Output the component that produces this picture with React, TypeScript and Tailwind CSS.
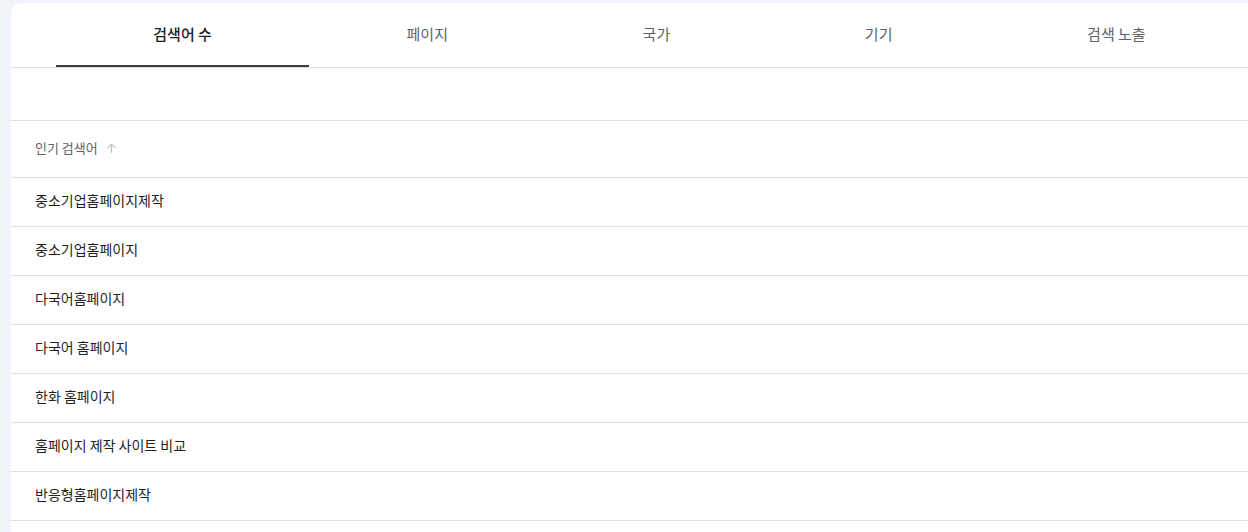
import React, { useState } from 'react';

const tabs = ['검색어 수', '페이지', '국가', '기기', '검색 노출'];

const queries = [
  '중소기업홈페이지제작',
  '중소기업홈페이지',
  '다국어홈페이지',
  '다국어 홈페이지',
  '한화 홈페이지',
  '홈페이지 제작 사이트 비교',
  '반응형홈페이지제작',
];

const font = { fontFamily: '"Noto Sans CJK KR", "Noto Sans", sans-serif' };

export default function App() {
  const [active, setActive] = useState(0);

  return (
    <div className="min-h-screen bg-[#f0f4f9] pt-[3px] pl-[11px]" style={font}>
      <div className="bg-white rounded-tl-[10px] min-h-[529px]">
        {/* Tabs */}
        <div className="flex h-[65px] pl-[45px] pr-[5px] border-b border-[#e0e0e0]">
          {tabs.map((t, i) => (
            <button
              key={t}
              onClick={() => setActive(i)}
              className={`flex-auto relative flex items-center justify-center text-[15px] ${
                i === active ? 'text-[#1f1f1f] font-medium' : 'text-[#5f6368]'
              }`}
            >
              <span className="-mt-[2px]">{t}</span>
              {i === active && (
                <span className="absolute left-0 right-0 bottom-0 h-[2px] bg-[#3c3c3c]" />
              )}
            </button>
          ))}
        </div>

        {/* Spacer */}
        <div className="h-[53px] border-b border-[#e0e0e0]" />

        {/* Header */}
        <div className="h-[57px] flex items-center px-6 pb-[3px] border-b border-[#e0e0e0] text-[13px] text-[#5f6368]">
          <span>인기 검색어</span>
          <svg width="13" height="13" viewBox="0 0 24 24" className="ml-[7px] mt-[1px]" fill="none" stroke="#bdbdbd" strokeWidth="2">
            <path d="M12 20V4M5 11l7-7 7 7" />
          </svg>
        </div>

        {/* Rows */}
        {queries.map((q) => (
          <div key={q} className="h-[49px] flex items-center px-6 pb-[4px] border-b border-[#e0e0e0] text-[14px] text-[#1f1f1f]">
            {q}
          </div>
        ))}
      </div>
    </div>
  );
}
